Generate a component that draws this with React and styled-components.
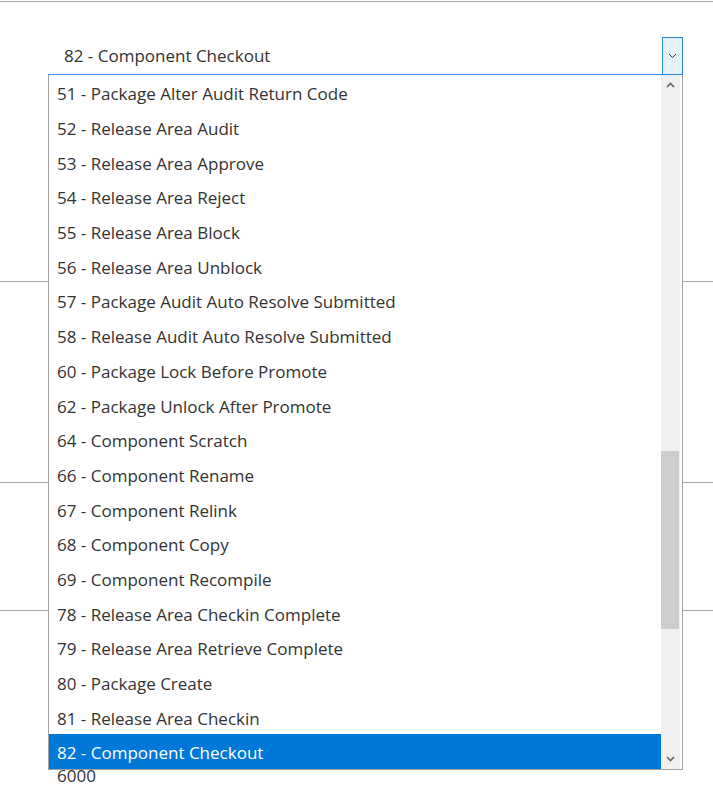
import React from 'react'
import styled, { createGlobalStyle } from 'styled-components'

const GlobalStyle = createGlobalStyle`
  html, body {
    margin: 0;
    padding: 0;
    background: #ffffff;
  }
  body {
    font-family: "Open Sans", "Noto Sans", sans-serif;
    color: #333333;
  }
`

const Page = styled.div`
  width: 713px;
  height: 785px;
  overflow: hidden;
  padding-top: 1px;
  box-sizing: border-box;
`

const Section = styled.div`
  border-top: 1px solid #a6a6a6;
  height: ${p => p.h}px;
  box-sizing: border-box;
  position: relative;
`

const SelectBox = styled.div`
  position: relative;
  margin: 35px 30px 0 48px;
  height: 38px;
  display: flex;
  align-items: center;
  border-bottom: 1px solid #3c8fdc;
  box-sizing: border-box;
`

const SelectText = styled.div`
  flex: 1;
  padding-left: 16px;
  font-size: 17px;
  color: #333333;
`

const SelectButton = styled.div`
  width: 19px;
  height: 36px;
  margin-top: 1px;
  border: 1px solid #2b85d9;
  background: #e5f1fb;
  display: flex;
  align-items: center;
  justify-content: center;
`

const Menu = styled.div`
  position: absolute;
  top: 38px;
  left: 0;
  right: 0;
  height: 695px;
  border: 1px solid #a0a0a0;
  border-top: none;
  background: #ffffff;
  display: flex;
  box-sizing: border-box;
  z-index: 5;
`

const List = styled.div`
  flex: 1;
  display: flex;
  flex-direction: column;
`

const Item = styled.div`
  height: 34.7px;
  box-sizing: border-box;
  padding-top: 3px;
  display: flex;
  align-items: center;
  padding-left: 8px;
  font-size: 17px;
  color: ${p => (p.selected ? '#ffffff' : '#333333')};
  background: ${p => (p.selected ? '#0078d7' : 'transparent')};
  white-space: nowrap;
`

const Scrollbar = styled.div`
  width: 19px;
  margin-right: 2px;
  background: #f0f0f0;
  display: flex;
  flex-direction: column;
`

const ArrowButton = styled.div`
  height: 20px;
  display: flex;
  align-items: center;
  justify-content: center;
`

const Track = styled.div`
  flex: 1;
  display: flex;
  flex-direction: column;
`

const Thumb = styled.div`
  margin: 0 1px 0 0;
  background: #cdcdcd;
`

const Value = styled.div`
  position: absolute;
  left: 57px;
  top: 153px;
  font-size: 17px;
  color: #333333;
`

const options = [
  '51 - Package Alter Audit Return Code',
  '52 - Release Area Audit',
  '53 - Release Area Approve',
  '54 - Release Area Reject',
  '55 - Release Area Block',
  '56 - Release Area Unblock',
  '57 - Package Audit Auto Resolve Submitted',
  '58 - Release Audit Auto Resolve Submitted',
  '60 - Package Lock Before Promote',
  '62 - Package Unlock After Promote',
  '64 - Component Scratch',
  '66 - Component Rename',
  '67 - Component Relink',
  '68 - Component Copy',
  '69 - Component Recompile',
  '78 - Release Area Checkin Complete',
  '79 - Release Area Retrieve Complete',
  '80 - Package Create',
  '81 - Release Area Checkin',
  '82 - Component Checkout',
]

const selected = '82 - Component Checkout'

const Chevron = ({ up, color = '#606060', w = 1.6 }) => (
  <svg width="9" height="6" viewBox="0 0 9 6">
    <path
      d={up ? 'M1 5 L4.5 1.5 L8 5' : 'M1 1 L4.5 4.5 L8 1'}
      fill="none"
      stroke={color}
      strokeWidth={w}
    />
  </svg>
)

export default function App() {
  const thumbTop = 356
  const thumbHeight = 178
  return (
    <Page>
      <GlobalStyle />
      <Section h={280}>
        <SelectBox>
          <SelectText>{selected}</SelectText>
          <SelectButton>
            <Chevron color="#333333" w={1} />
          </SelectButton>
          <Menu>
            <List>
              {options.map(o => (
                <Item key={o} selected={o === selected}>{o}</Item>
              ))}
            </List>
            <Scrollbar>
              <ArrowButton><Chevron up /></ArrowButton>
              <Track>
                <div style={{ height: thumbTop }} />
                <Thumb style={{ height: thumbHeight }} />
              </Track>
              <ArrowButton><Chevron /></ArrowButton>
            </Scrollbar>
          </Menu>
        </SelectBox>
      </Section>
      <Section h={201} />
      <Section h={128} />
      <Section h={175}>
        <Value>6000</Value>
      </Section>
    </Page>
  )
}
